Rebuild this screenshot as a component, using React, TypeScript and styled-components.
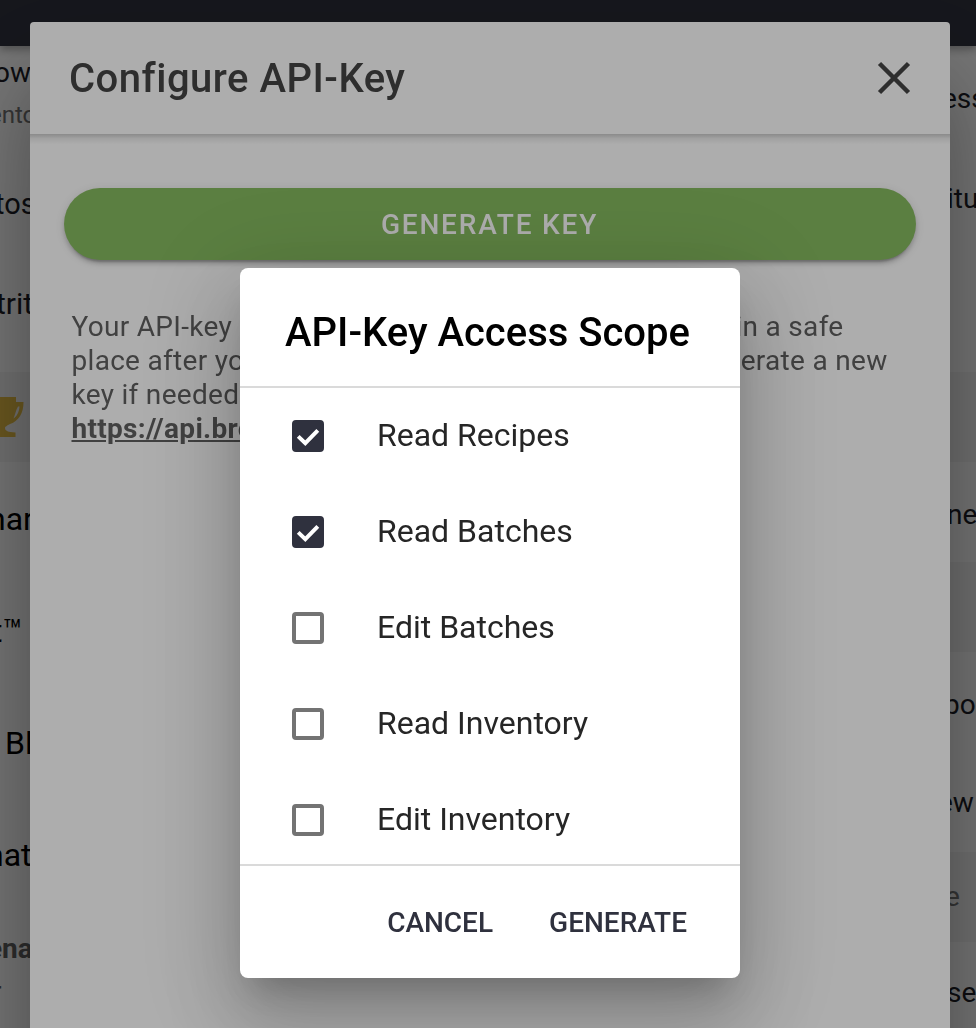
import React, { useState } from "react";
import styled, { createGlobalStyle } from "styled-components";

const GlobalStyle = createGlobalStyle`
  * { box-sizing: border-box; }
  html, body { margin: 0; padding: 0; height: 100%; overflow: hidden; background: #fff; }
  body { font-family: Roboto, "Liberation Sans", sans-serif; color: #000; }
  button { font-family: inherit; border: 0; background: none; padding: 0; cursor: pointer; }
`;

const Page = styled.div`
  height: 1028px;
  overflow: hidden;
  background: #fff;
`;

const TopBar = styled.div`
  position: relative;
  height: 46px;
  background: #30323e;
  box-shadow: 0 4px 8px rgba(0, 0, 0, 0.3);
`;

const Columns = styled.div`
  display: flex;
  justify-content: space-between;
`;

const Column = styled.div<{ $width: number }>`
  width: ${(p) => p.$width}px;
  overflow: hidden;
`;

const ListRow = styled.div<{ $height: number; $shaded?: boolean; $pad?: number }>`
  display: flex;
  align-items: center;
  height: ${(p) => p.$height}px;
  padding-top: ${(p) => p.$pad ?? 0}px;
  background: ${(p) => (p.$shaded ? "#f4f4f4" : "transparent")};
`;

const RowText = styled.span<{
  $shift: number;
  $size?: number;
  $color?: string;
  $weight?: number;
}>`
  flex: none;
  margin-left: ${(p) => p.$shift}px;
  font-size: ${(p) => p.$size ?? 30}px;
  line-height: 36px;
  font-weight: ${(p) => p.$weight ?? 400};
  color: ${(p) => p.$color ?? "#1c1d26"};
  white-space: nowrap;
`;

const Trophy = styled.svg`
  flex: none;
  width: 48px;
  height: 44px;
  margin-left: -24px;
`;

const Layer = styled.div`
  position: fixed;
  inset: 0;
  display: flex;
  justify-content: center;
  background: rgba(0, 0, 0, 0.32);
`;

const Modal = styled.section`
  width: 920px;
  height: 1100px;
  margin: 22px 0 0 4px;
  flex: none;
  border-radius: 4px;
  background: #fff;
  box-shadow: 0 56px 96px rgba(0, 0, 0, 0.4);
`;

const ModalHeader = styled.header`
  display: flex;
  align-items: center;
  justify-content: space-between;
  height: 112px;
  padding: 0 24px 0 39px;
`;

const HeaderShade = styled.div`
  height: 10px;
  background: linear-gradient(rgba(0, 0, 0, 0.2), rgba(0, 0, 0, 0.07) 45%, rgba(0, 0, 0, 0));
`;

const ModalTitle = styled.h1`
  margin: 0;
  font-size: 40px;
  font-weight: 500;
  letter-spacing: 0.5px;
  color: #444;
`;

const CloseButton = styled.button`
  width: 64px;
  height: 64px;
  svg { display: block; }
`;

const ModalBody = styled.div`
  padding: 44px 34px 0;
`;

const GenerateKey = styled.button`
  display: block;
  width: 100%;
  height: 72px;
  padding-right: 1px;
  border-radius: 36px;
  background: #87bb60;
  color: #fff;
  font-size: 28px;
  font-weight: 500;
  letter-spacing: 1.8px;
  text-transform: uppercase;
  box-shadow: 0 6px 2px -4px rgba(0, 0, 0, 0.2), 0 4px 4px rgba(0, 0, 0, 0.14),
    0 2px 10px rgba(0, 0, 0, 0.12);
`;

const Description = styled.div`
  margin: 50px 0 0 7.5px;
  font-size: 28px;
  letter-spacing: 0.3px;
  line-height: 34px;
  color: #616161;
`;

const TextLine = styled.div<{ $width?: number }>`
  display: flex;
  justify-content: space-between;
  width: ${(p) => (p.$width ? `${p.$width}px` : "auto")};
  white-space: nowrap;
`;

const ApiLink = styled.a`
  font-weight: 700;
  color: inherit;
  text-decoration: underline;
`;

const Alert = styled.section`
  width: 500px;
  height: 710px;
  margin: 268px 0 0 4px;
  flex: none;
  display: flex;
  flex-direction: column;
  overflow: hidden;
  border-radius: 8px;
  background: #fff;
  box-shadow: 0 22px 30px -14px rgba(0, 0, 0, 0.2), 0 48px 76px 6px rgba(0, 0, 0, 0.14),
    0 18px 92px 16px rgba(0, 0, 0, 0.12);
`;

const AlertTitle = styled.h2`
  flex: none;
  height: 118px;
  margin: 0;
  padding: 41px 45px 0;
  font-size: 40px;
  line-height: 48px;
  font-weight: 500;
  white-space: nowrap;
`;

const OptionList = styled.div`
  height: 480px;
  flex: none;
  overflow: hidden;
  border-top: 2px solid #dadada;
  border-bottom: 2px solid #dadada;
`;

const Option = styled.label`
  display: flex;
  align-items: center;
  height: 96px;
  padding-left: 52px;
  gap: 53px;
  font-size: 32px;
  color: #262626;
  input { display: none; }
`;

const OptionText = styled.span`
  padding-bottom: 2px;
`;

const Box = styled.span<{ $checked: boolean }>`
  width: 32px;
  height: 32px;
  border-radius: 4px;
  border: 4px solid ${(p) => (p.$checked ? "#2f313e" : "#737373")};
  background: ${(p) => (p.$checked ? "#2f313e" : "#fff")};
  svg { display: block; }
`;

const Actions = styled.div`
  display: flex;
  flex: 1;
  align-items: center;
  justify-content: flex-end;
  gap: 56px;
  padding-right: 53px;
`;

const ActionButton = styled.button`
  color: #2f313e;
  font-size: 28px;
  font-weight: 500;
  text-transform: uppercase;
`;

const scopes = [
  { label: "Read Recipes", on: true },
  { label: "Read Batches", on: true },
  { label: "Edit Batches", on: false },
  { label: "Read Inventory", on: false },
  { label: "Edit Inventory", on: false },
];

export default function App() {
  const [checked, setChecked] = useState(scopes.map((s) => s.on));
  const toggle = (i: number) => setChecked(checked.map((c, j) => (j === i ? !c : c)));

  return (
    <>
      <GlobalStyle />
      <Page>
        <TopBar />
        <Columns>
          <Column $width={34}>
            <ListRow $height={52} $pad={2}><RowText $shift={-6} $size={28}>ow</RowText></ListRow>
            <ListRow $height={32} $pad={1}><RowText $shift={-11} $size={24} $color="#737373">ento</RowText></ListRow>
            <ListRow $height={148}><RowText $shift={-5} $size={29}>tos</RowText></ListRow>
            <ListRow $height={52}><RowText $shift={-4}>trit</RowText></ListRow>
            <ListRow $height={42} />
            <ListRow $height={90} $shaded>
              <Trophy viewBox="0 0 48 44" fill="#e6be44" fillRule="evenodd">
                <path d="M8 2H40V7H47.5C47.5 18 43 26 34 29C30 31 29 32 29 33C29 36 32 37 39.5 37.5V42H8.500V37.500C16 37 19 36 19 33C19 32 18 31 14 29C5 26 .5 18 .5 7H8ZM42 11.500H43.500C43 17.500 41 21 37.500 23.500C39 20 40 15 42 11.500ZM6 11.500H4.500C5 17.500 7 21 10.500 23.500C9 20 8 15 6 11.500Z" />
              </Trophy>
            </ListRow>
            <ListRow $height={114}><RowText $shift={-12} $size={32} $color="#000">nar</RowText></ListRow>
            <ListRow $height={110}><RowText $shift={-8} $size={32} $color="#000">t™</RowText></ListRow>
            <ListRow $height={114}><RowText $shift={5} $size={32} $color="#000">Bl</RowText></ListRow>
            <ListRow $height={110}><RowText $shift={-14} $size={32} $color="#000">nat</RowText></ListRow>
            <ListRow $height={76} $pad={2}><RowText $shift={-13} $size={28} $weight={700} $color="#616161">ena</RowText></ListRow>
            <ListRow $height={12}><RowText $shift={-8} $size={28} $color="#616161">r</RowText></ListRow>
          </Column>
          <Column $width={30}>
            <ListRow $height={104} $pad={2}><RowText $shift={-4} $size={28}>ess</RowText></ListRow>
            <ListRow $height={96} $pad={2}><RowText $shift={1} $size={28}>itu</RowText></ListRow>
            <ListRow $height={126} />
            <ListRow $height={90} $shaded />
            <ListRow $height={100} $pad={5}><RowText $shift={1} $size={28}>ne</RowText></ListRow>
            <ListRow $height={90} $shaded />
            <ListRow $height={102} $pad={4}><RowText $shift={-2} $size={28}>po</RowText></ListRow>
            <ListRow $height={98}><RowText $shift={-8} $size={28}>ew</RowText></ListRow>
            <ListRow $height={90} $shaded><RowText $shift={-1} $size={28} $color="#737373">e</RowText></ListRow>
            <ListRow $height={100} $pad={2}><RowText $shift={1} $size={28}>se</RowText></ListRow>
          </Column>
        </Columns>
      </Page>

      <Layer>
        <Modal>
          <ModalHeader>
            <ModalTitle>Configure API-Key</ModalTitle>
            <CloseButton aria-label="Close">
              <svg width="64" height="64" viewBox="0 0 512 512" fill="none" stroke="#444" strokeWidth="36">
                <path d="M372 372L140 140M372 140L140 372" />
              </svg>
            </CloseButton>
          </ModalHeader>
          <HeaderShade />
          <ModalBody>
            <GenerateKey>Generate key</GenerateKey>
            <Description>
              <TextLine $width={772}>
                <span>Your API-key is only shown once,</span>
                <span>so store it in a safe</span>
              </TextLine>
              <TextLine $width={816}>
                <span>place after you have created it. You</span>
                <span>can generate a new</span>
              </TextLine>
              <TextLine>key if needed.</TextLine>
              <TextLine><ApiLink>https://api.brewfather.app</ApiLink></TextLine>
            </Description>
          </ModalBody>
        </Modal>
      </Layer>

      <Layer>
        <Alert role="alertdialog">
          <AlertTitle>API-Key Access Scope</AlertTitle>
          <OptionList>
            {scopes.map((scope, i) => (
              <Option key={scope.label}>
                <input type="checkbox" checked={checked[i]} onChange={() => toggle(i)} />
                <Box $checked={checked[i]}>
                  {checked[i] && (
                    <svg width="24" height="24" viewBox="0 0 24 24" fill="none" stroke="#fff" strokeWidth="4">
                      <path d="M2.2 12.4L9.3 19.2L21.8 6.4" />
                    </svg>
                  )}
                </Box>
                <OptionText>{scope.label}</OptionText>
              </Option>
            ))}
          </OptionList>
          <Actions>
            <ActionButton>Cancel</ActionButton>
            <ActionButton>Generate</ActionButton>
          </Actions>
        </Alert>
      </Layer>
    </>
  );
}
